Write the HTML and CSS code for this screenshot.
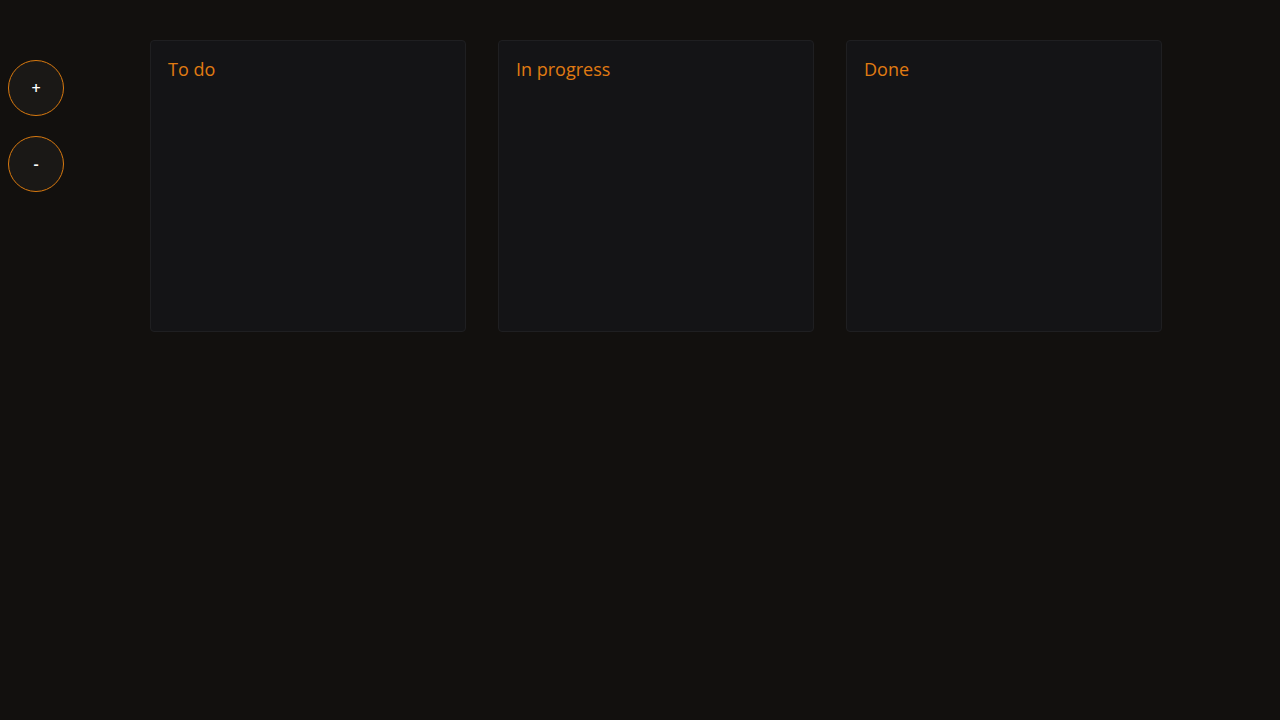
FILE: index.html
```html
<!DOCTYPE html>
<html>
<head>
<meta charset="utf-8">
<link rel="stylesheet" href="styles.css">
</head>
<body>
<div class="app">
  <div class="controls">
    <button class="circle-btn">+</button>
    <button class="circle-btn">-</button>
  </div>
  <div class="board">
    <div class="column"><h2 class="column-title">To do</h2></div>
    <div class="column"><h2 class="column-title">In progress</h2></div>
    <div class="column"><h2 class="column-title">Done</h2></div>
  </div>
</div>
</body>
</html>
```
FILE: styles.css
```css
html, body {
  margin: 0;
  padding: 0;
  background: #12100e;
  height: 100%;
  font-family: "Open Sans", "Lato", sans-serif;
}
.app {
  display: flex;
  align-items: flex-start;
}
.controls {
  display: flex;
  flex-direction: column;
  gap: 20px;
  padding: 60px 0 0 8px;
}
.circle-btn {
  width: 56px;
  height: 56px;
  border-radius: 50%;
  border: 1px solid #d8790f;
  background: #1a1816;
  color: #ffffff;
  font-family: "Open Sans", sans-serif;
  font-size: 16px;
  font-weight: 600;
  padding: 0;
  display: flex;
  align-items: center;
  justify-content: center;
}
.board {
  display: flex;
  gap: 32px;
  margin-left: 86px;
  padding-top: 40px;
}
.column {
  width: 316px;
  height: 292px;
  box-sizing: border-box;
  background: #141416;
  border: 1px solid #1f1f21;
  border-radius: 4px;
  padding: 16px 17px;
}
.column-title {
  margin: 0;
  color: #e07b12;
  font-size: 18px;
  font-weight: 500;
  line-height: 24px;
}
```
